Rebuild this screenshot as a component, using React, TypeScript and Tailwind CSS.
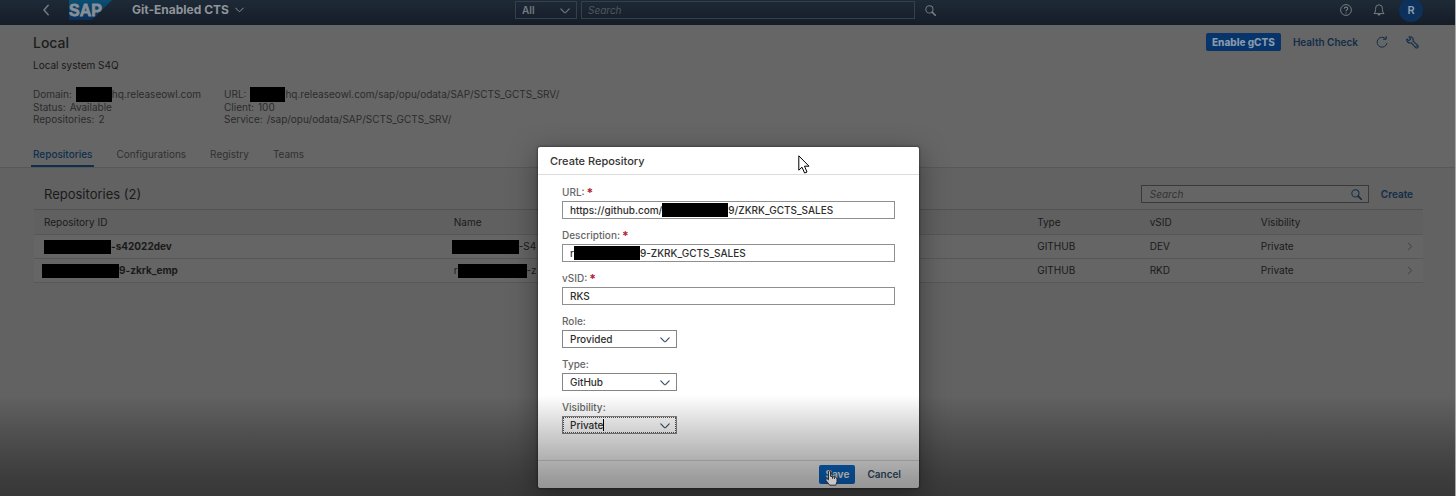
import type { ReactNode } from 'react';

const repositories = [
  { idPad: 'pl-[10px]', idBox: 'w-[67px]', id: '-s42022dev', namePad: 'pl-2', lead: '', nameBox: 'w-[67px]', name: '-S4', vsid: 'DEV' },
  { idPad: 'pl-2', idBox: 'w-[77px]', id: '9-zkrk_emp', namePad: 'pl-[10px]', lead: 'r', nameBox: 'w-[69px]', name: '-z', vsid: 'RKD' },
];

function Redacted({ className }: { className: string }) {
  return <span className={`inline-block shrink-0 bg-black align-middle ${className}`} />;
}

function Chevron({ className }: { className: string }) {
  return (
    <svg viewBox="0 0 10 6" className={className} fill="none" stroke="currentColor" strokeWidth="1.1" strokeLinecap="round" strokeLinejoin="round">
      <path d="M0.8 0.8 L4.2 4.4 Q5 5.1 5.8 4.4 L9.2 0.8" />
    </svg>
  );
}

function SearchIcon({ className }: { className: string }) {
  return (
    <svg viewBox="0 0 12 12" className={className} fill="none" stroke="currentColor">
      <circle cx="4.8" cy="4.8" r="3.9" strokeWidth="1.1" />
      <path d="M7.8 7.8 L11.2 11.2" strokeWidth="1.8" strokeLinecap="round" />
    </svg>
  );
}

function ShellBar() {
  return (
    <header className="grid h-[25px] grid-cols-[1fr_auto_1fr] items-start bg-linear-to-b from-[#1e2a37] to-[#141c27] text-[#747b82]">
      <div className="flex h-5 items-center pl-[42px]">
        <button type="button" aria-label="Back" className="flex w-[27px] justify-start">
          <svg viewBox="0 0 8 12" className="h-3 w-2" fill="none" stroke="currentColor" strokeWidth="1.5" strokeLinecap="round" strokeLinejoin="round">
            <path d="M6.2 1.2 L2 6 L6.2 10.8" />
          </svg>
        </button>
        <svg viewBox="0 0 43 20" className="h-5 w-[43px]" role="img" aria-label="SAP">
          <defs>
            <linearGradient id="logo" x1="0" y1="0" x2="0" y2="1">
              <stop offset="0" stopColor="#0a4f73" />
              <stop offset="1" stopColor="#0b2f58" />
            </linearGradient>
          </defs>
          <path d="M0 0 H43 L23 20 H0 Z" fill="url(#logo)" />
          <text x="0" y="16" fontFamily="Liberation Sans, Arial, sans-serif" fontWeight="700" fontSize="16" fill="#858f97" stroke="#858f97" strokeWidth="0.8">SAP</text>
        </svg>
        <button type="button" className="ml-5 flex items-center gap-1.5 text-[12px] leading-4 font-bold text-[#8f9499]">
          Git-Enabled CTS
          <Chevron className="h-[6px] w-[9px]" />
        </button>
      </div>
      <div className="flex items-center gap-1 pt-px pr-1">
        <div className="relative">
          <select aria-label="Search scope" defaultValue="All" className="block h-[18px] w-[62px] appearance-none border border-[#36404b] bg-transparent pl-1.5 text-[10px] leading-4 font-semibold">
            <option>All</option>
          </select>
          <Chevron className="pointer-events-none absolute top-[7px] right-[7px] h-[6px] w-[10px]" />
        </div>
        <input type="search" aria-label="Search" placeholder="Search" className="h-[18px] w-[334px] border border-[#36404b] bg-transparent px-1.5 text-[10px] leading-4 placeholder:text-[#4f575f] placeholder:italic" />
        <button type="button" aria-label="Start search" className="ml-1.5">
          <SearchIcon className="h-[11px] w-[11px]" />
        </button>
      </div>
      <div className="flex h-5 items-center justify-end pr-8">
        <button type="button" aria-label="Help" className="mr-[21px]">
          <svg viewBox="0 0 12 12" className="h-3 w-3" fill="none" stroke="currentColor" strokeWidth="1">
            <circle cx="6" cy="6" r="5.4" />
            <path d="M4.2 4.7 Q4.3 3.1 6 3.1 Q7.8 3.1 7.8 4.6 Q7.8 5.4 6.8 6 Q6 6.5 6 7.3 M6 8.4 V9.5" strokeWidth="1.2" />
          </svg>
        </button>
        <button type="button" aria-label="Notifications" className="mr-3.5">
          <svg viewBox="0 0 12 12" className="h-3 w-3" fill="none" stroke="currentColor" strokeWidth="1" strokeLinejoin="round">
            <path d="M1 9.6 Q2.6 8.4 2.6 5.6 V4.2 Q2.6 0.8 6 0.8 Q9.4 0.8 9.4 4.2 V5.6 Q9.4 8.4 11 9.6 Z" />
            <path d="M4.8 10.6 H7.2" strokeWidth="1.6" />
          </svg>
        </button>
        <button type="button" aria-label="Profile" className="flex size-6 items-center justify-center rounded-full bg-[#0d315b] text-[11px] font-semibold text-[#8b9db2]">R</button>
      </div>
    </header>
  );
}

function Tab({ active = false, children }: { active?: boolean; children: ReactNode }) {
  return (
    <button
      type="button"
      className={
        active
          ? 'border-b-2 border-[#0e304e] px-0.5 pb-1 font-medium text-[#0e304e]'
          : 'border-b-2 border-transparent px-0.5 pb-1 text-[#303030]'
      }
    >
      {children}
    </button>
  );
}

function ObjectHeader() {
  return (
    <section className="border-b border-[#585858] bg-[#666] pr-9 pl-[33px] text-[10px] leading-[13px] text-[#2b2b2b]">
      <div className="flex items-start justify-between pt-2">
        <div>
          <h1 className="text-[14px] leading-5 font-medium text-[#1c1c1c]">Local</h1>
          <p className="mt-1.5 text-[#1a1a1a]">Local system S4Q</p>
        </div>
        <div className="flex items-center font-semibold text-[#122c47]">
          <button type="button" className="h-[18px] rounded-[2px] bg-[#06346b] px-1.5 font-extrabold text-[#8799ad]">Enable gCTS</button>
          <button type="button" className="ml-3">Health Check</button>
          <button type="button" aria-label="Refresh" className="ml-[18px]">
            <svg viewBox="0 0 12 12" className="h-3 w-3" fill="none" stroke="currentColor" strokeWidth="1" strokeLinecap="round">
              <path d="M11 7.4 A5 5 0 1 1 9.6 2.6 M10.2 0.5 V3.2 H7.4" />
            </svg>
          </button>
          <button type="button" aria-label="Settings" className="ml-[18px]">
            <svg viewBox="0 0 13 13" className="h-[13px] w-[13px]" fill="none" stroke="currentColor" strokeWidth="1.1" strokeLinejoin="round">
              <path d="M3 0.9 Q5 0.2 6.5 1.8 Q7.7 3.2 7 5.1 L12 9.7 Q12.6 10.6 11.8 11.6 Q10.8 12.4 9.8 11.7 L5.3 6.9 Q3.2 7.4 1.7 6 Q0.3 4.5 0.9 2.9 L2.9 4.7 L4.7 3.2 Z" />
              <path d="M10.1 9.8 L10.9 10.6" />
            </svg>
          </button>
        </div>
      </div>
      <div className="mt-4 flex">
        <dl className="w-[191px]">
          <div className="flex h-[13px] items-center gap-1">
            <dt>Domain:</dt><dd className="flex items-center"><Redacted className="h-[15px] w-[36px]" />hq.releaseowl.com</dd>
          </div>
          <div className="flex h-[12px] items-center gap-1"><dt>Status:</dt><dd>Available</dd></div>
          <div className="flex h-[13px] items-center gap-1"><dt>Repositories:</dt><dd>2</dd></div>
        </dl>
        <dl>
          <div className="flex h-[13px] items-center gap-1">
            <dt>URL:</dt><dd className="flex items-center"><Redacted className="h-[15px] w-[35px]" />hq.releaseowl.com/sap/opu/odata/SAP/SCTS_GCTS_SRV/</dd>
          </div>
          <div className="flex h-[12px] items-center gap-1"><dt>Client:</dt><dd>100</dd></div>
          <div className="flex h-[13px] items-center gap-1"><dt>Service:</dt><dd>/sap/opu/odata/SAP/SCTS_GCTS_SRV/</dd></div>
        </dl>
      </div>
      <nav className="-ml-0.5 mt-[22px] flex gap-5">
        <Tab active>Repositories</Tab>
        <Tab>Configurations</Tab>
        <Tab>Registry</Tab>
        <Tab>Teams</Tab>
      </nav>
    </section>
  );
}

function RepositoryTable() {
  return (
    <section className="pt-[17px] pr-8 pl-[34px] text-[10px] leading-[13px] text-[#1a1a1a]">
      <div className="flex h-6 items-start justify-between pr-2.5 pl-2.5">
        <h2 className="text-[13px] leading-[18px]">Repositories (2)</h2>
        <div className="flex items-center gap-3">
          <div className="relative">
            <input type="search" aria-label="Search repositories" placeholder="Search" className="block h-[18px] w-[228px] border border-[#3a3a3a] bg-[#656565] pr-6 pl-2 placeholder:text-[#333] placeholder:italic" />
            <SearchIcon className="absolute top-[4px] right-[7px] h-[11px] w-[11px] text-[#122c47]" />
          </div>
          <button type="button" className="font-semibold text-[#122c47]">Create</button>
        </div>
      </div>
      <table className="w-full table-fixed border-t border-[#525252] text-left">
        <colgroup>
          <col className="w-[29.5%]" />
          <col />
          <col className="w-[8.1%]" />
          <col className="w-[8%]" />
          <col className="w-[10%]" />
          <col className="w-[2.4%]" />
        </colgroup>
        <thead>
          <tr className="h-[25px] border-b border-[#575757] bg-[#606060]">
            <th className="pl-2.5 font-normal">Repository ID</th>
            <th className="pl-2.5 font-normal">Name</th>
            <th className="pl-2.5 font-normal">Type</th>
            <th className="pl-2.5 font-normal">vSID</th>
            <th className="pl-2.5 font-normal">Visibility</th>
            <th aria-label="Open" />
          </tr>
        </thead>
        <tbody>
          {repositories.map((repo) => (
            <tr key={repo.vsid} className="h-6 border-b border-[#585858] bg-[#656565]">
              <td className={repo.idPad}>
                <div className="flex items-center font-bold"><Redacted className={`h-[14px] ${repo.idBox}`} />{repo.id}</div>
              </td>
              <td className={repo.namePad}>
                <div className="flex items-center">{repo.lead}<Redacted className={`h-[14px] ${repo.nameBox}`} />{repo.name}</div>
              </td>
              <td className="pl-2.5">GITHUB</td>
              <td className="pl-2.5">{repo.vsid}</td>
              <td className="pl-2.5">Private</td>
              <td className="pl-4">
                <Chevron className="h-[5px] w-2 -rotate-90 text-[#3b3b3b]" />
              </td>
            </tr>
          ))}
        </tbody>
      </table>
    </section>
  );
}

function TextField({ id, label, value, children }: { id: string; label: string; value: string; children?: ReactNode }) {
  return (
    <div className="mb-2.5">
      <label htmlFor={id} className="flex h-[15px] gap-0.5 leading-[13px] text-[#666]">
        {label}: <span className="text-[12px] font-bold text-[#b3202c]">*</span>
      </label>
      <div className="flex h-[18px] items-center border border-[#8f8f8f] bg-white pl-[7px]">
        {children}
        <input id={id} type="text" defaultValue={value} className="min-w-0 flex-1 bg-transparent text-[#2e2e2e] outline-none" />
      </div>
    </div>
  );
}

function SelectField({ id, label, value, focused = false }: { id: string; label: string; value: string; focused?: boolean }) {
  return (
    <div className="mb-2.5">
      <label htmlFor={id} className="block h-[15px] leading-[13px] text-[#666]">{label}:</label>
      <div className="relative w-[115px]">
        <select id={id} defaultValue={value} className="block h-[18px] w-full appearance-none border border-[#858585] bg-white pl-[7px] text-[#2e2e2e] outline-none">
          <option>{value}</option>
        </select>
        {focused && (
          <>
            <span className="pointer-events-none absolute inset-px border border-dotted border-[#555]" />
            <span className="pointer-events-none absolute top-[3px] left-[41px] h-3 w-px bg-black" />
          </>
        )}
        <Chevron className="pointer-events-none absolute top-[7px] right-[7px] h-[6px] w-[10px] text-[#2f4a66]" />
      </div>
    </div>
  );
}

function CreateDialog() {
  return (
    <div className="absolute inset-0 flex items-start justify-center pt-[147px] pl-0.5">
      <form role="dialog" aria-labelledby="dialog-title" className="relative w-[381px] rounded-[2px] bg-white text-[10px] leading-[13px] font-medium shadow-[0_0_2px_1px_rgba(0,0,0,0.3),0_8px_28px_2px_rgba(0,0,0,0.35)]">
        <h2 id="dialog-title" className="h-7 border-b border-[#dcdcdc] pl-3 text-[11px] leading-7 font-medium text-[#333]">Create Repository</h2>
        <div className="px-6 pt-[11px] pb-4">
          <TextField id="url" label="URL" value="9/ZKRK_GCTS_SALES">
            <span className="text-[#2e2e2e]">https://github.com/</span>
            <Redacted className="h-[14px] w-[66px]" />
          </TextField>
          <TextField id="description" label="Description" value="9-ZKRK_GCTS_SALES">
            <span className="text-[#2e2e2e]">r</span>
            <Redacted className="h-[14px] w-[66px]" />
          </TextField>
          <TextField id="vsid" label="vSID" value="RKS" />
          <SelectField id="role" label="Role" value="Provided" />
          <SelectField id="type" label="Type" value="GitHub" />
          <SelectField id="visibility" label="Visibility" value="Private" focused />
        </div>
        <footer className="flex h-7 items-center justify-end gap-3 border-t border-[#dcdcdc] pr-[18px] font-semibold">
          <button type="button" className="h-[19px] rounded-[2px] bg-[#0a6ed1] px-1.5 font-bold text-white">Save</button>
          <button type="button" className="text-[#34536f]">Cancel</button>
        </footer>
        <svg viewBox="0 0 12 19" className="pointer-events-none absolute top-2 left-[260px] h-[19px] w-3" fill="#fff" stroke="#000" strokeWidth="1">
          <path d="M0.8 0.8 V15.2 L4 12.2 L6.6 18 L9 17 L6.5 11.2 H11 Z" />
        </svg>
      </form>
    </div>
  );
}

export default function App() {
  return (
    <div className="relative min-h-screen overflow-hidden border-r border-[#a8a8a8] bg-[#626262] font-['Inter','Liberation_Sans',sans-serif]">
      <ShellBar />
      <ObjectHeader />
      <RepositoryTable />
      <CreateDialog />
      <div className="pointer-events-none absolute inset-x-0 bottom-0 h-[101px] bg-[linear-gradient(to_bottom,rgba(0,0,0,0)_0%,rgba(0,0,0,0.18)_36%,rgba(0,0,0,0.30)_62%,rgba(0,0,0,0.39)_83%,rgba(0,0,0,0.43)_100%)]" />
      <div className="pointer-events-none absolute inset-x-0 top-[470px] flex justify-center">
        <svg viewBox="0 0 13 16" className="ml-[208px] h-4 w-[13px]" fill="#c8c8c8" stroke="#222" strokeWidth="0.9" strokeLinejoin="round">
          <path d="M3.5 9.5 V2 Q3.5 0.7 4.5 0.7 Q5.5 0.7 5.5 2 V6.3 L10.5 7.2 Q12 7.5 12 9 V11.5 L10.8 15.2 H4.7 L1 10.4 Q0.6 9.3 1.4 8.8 Q2.2 8.5 3.5 10 Z" />
          <path d="M7.5 7 V8.8 M9.5 7.4 V9" />
        </svg>
      </div>
    </div>
  );
}
